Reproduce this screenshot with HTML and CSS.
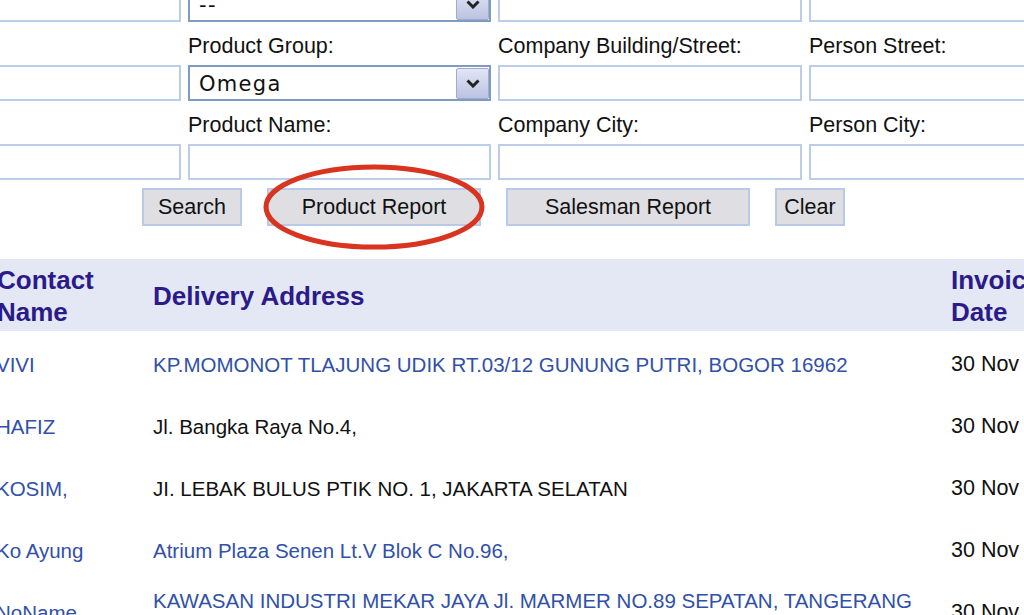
FILE: index.html
```html
<!DOCTYPE html>
<html>
<head>
<meta charset="utf-8">
<link rel="stylesheet" href="styles.css">
</head>
<body>
<div class="form">
  <div class="field"></div>
  <div class="select"><span class="val">--</span><span class="dd"><svg width="14" height="9" viewBox="0 0 14 9"><path d="M1.5 1.5 L7 7 L12.5 1.5" fill="none" stroke="#222" stroke-width="3"/></svg></span></div>
  <div class="field"></div>
  <div class="field"></div>

  <div class="label"></div>
  <div class="label">Product Group:</div>
  <div class="label">Company Building/Street:</div>
  <div class="label">Person Street:</div>

  <div class="field"></div>
  <div class="select"><span class="val">Omega</span><span class="dd"><svg width="14" height="9" viewBox="0 0 14 9"><path d="M1.5 1.5 L7 7 L12.5 1.5" fill="none" stroke="#222" stroke-width="3"/></svg></span></div>
  <div class="field"></div>
  <div class="field"></div>

  <div class="label"></div>
  <div class="label">Product Name:</div>
  <div class="label">Company City:</div>
  <div class="label">Person City:</div>

  <div class="field"></div>
  <div class="field"></div>
  <div class="field"></div>
  <div class="field"></div>
</div>

<div class="buttons">
  <button class="btn w-search">Search</button>
  <button class="btn w-product">Product Report</button>
  <button class="btn w-sales">Salesman Report</button>
  <button class="btn w-clear">Clear</button>
  <svg class="circle" width="230" height="92" viewBox="0 0 230 92"><ellipse cx="115" cy="46" rx="108" ry="40" fill="none" stroke="#d8341f" stroke-width="5"/></svg>
</div>

<table class="grid">
  <colgroup><col class="c1"><col class="c2"><col class="c3"></colgroup>
  <thead>
    <tr><th>Contact<br>Name</th><th>Delivery Address</th><th>Invoice<br>Date</th></tr>
  </thead>
  <tbody>
    <tr><td class="link">VIVI</td><td class="link">KP.MOMONOT TLAJUNG UDIK RT.03/12 GUNUNG PUTRI, BOGOR 16962</td><td class="date">30 Nov</td></tr>
    <tr><td class="link">HAFIZ</td><td>Jl. Bangka Raya No.4,</td><td class="date">30 Nov</td></tr>
    <tr><td class="link">KOSIM,</td><td>JI. LEBAK BULUS PTIK NO. 1, JAKARTA SELATAN</td><td class="date">30 Nov</td></tr>
    <tr><td class="link">Ko Ayung</td><td class="link">Atrium Plaza Senen Lt.V Blok C No.96,</td><td class="date">30 Nov</td></tr>
    <tr><td class="link">NoName</td><td class="link">KAWASAN INDUSTRI MEKAR JAYA Jl. MARMER NO.89 SEPATAN, TANGERANG 15520</td><td class="date">30 Nov</td></tr>
  </tbody>
</table>
</body>
</html>
```
FILE: styles.css
```css
html, body {
  margin: 0;
  padding: 0;
  background: #ffffff;
  overflow: hidden;
  width: 1024px;
  height: 615px;
}
body {
  font-family: "Liberation Sans", Arial, sans-serif;
  color: #111;
}
.form {
  display: grid;
  grid-template-columns: 300px 303px 304px 304px;
  grid-auto-rows: auto;
  column-gap: 7px;
  margin-left: -119px;
  margin-top: -14px;
  width: 1240px;
}
.field, .select {
  height: 36px;
  box-sizing: border-box;
  border: 2px solid #bccdea;
  background: #fff;
}
.select {
  border-color: #7f9cc0;
  display: flex;
  align-items: center;
  justify-content: space-between;
  padding: 0 0 0 9px;
}
.select .val {
  font-family: "DejaVu Sans", Verdana, sans-serif;
  font-size: 21px;
  letter-spacing: 1.3px;
  color: #111;
  padding-top: 2px;
}
.select .dd {
  width: 33px;
  height: 31px;
  margin-right: 0;
  box-sizing: border-box;
  border: 1px solid #a0abd0;
  border-radius: 2px;
  background: linear-gradient(#e2e5f5, #bcc3e2);
  display: flex;
  align-items: center;
  justify-content: center;
}
.label {
  height: 43px;
  box-sizing: border-box;
  padding-top: 12px;
  line-height: 25px;
  font-size: 21.5px;
  white-space: nowrap;
  color: #111;
}
.buttons {
  position: relative;
  display: flex;
  gap: 25px;
  padding-left: 142px;
  margin-top: 8px;
}
.btn {
  height: 38px;
  box-sizing: border-box;
  border: 2px solid #b9c9e8;
  background: #dfdfe3;
  font-family: "Liberation Sans", Arial, sans-serif;
  font-size: 21.5px;
  color: #111;
  padding: 0;
  border-radius: 0;
}
.w-search { width: 100px; }
.w-product { width: 214px; }
.w-sales { width: 244px; }
.w-clear { width: 70px; }
.circle {
  position: absolute;
  left: 259px;
  top: -27px;
}
.grid {
  border-collapse: collapse;
  table-layout: fixed;
  width: 1200px;
  margin-left: -13px;
  margin-top: 33px;
}
.c1 { width: 156px; }
.c2 { width: 798px; }
.c3 { width: 246px; }
.grid th {
  background: #e4e8f4;
  color: #2b1a8a;
  font-weight: bold;
  font-size: 26px;
  line-height: 32px;
  height: 70px;
  text-align: left;
  vertical-align: middle;
  padding: 2px 10px 0 10px;
  white-space: nowrap;
}
.grid td {
  height: 62px;
  box-sizing: border-box;
  padding: 4px 10px 0 10px;
  font-size: 20.5px;
  line-height: 23px;
  vertical-align: middle;
  color: #111;
}
.grid td:first-child { padding-left: 9px; }
.grid td.link { color: #3050aa; }
.grid td.date { font-size: 21.5px; }
```
